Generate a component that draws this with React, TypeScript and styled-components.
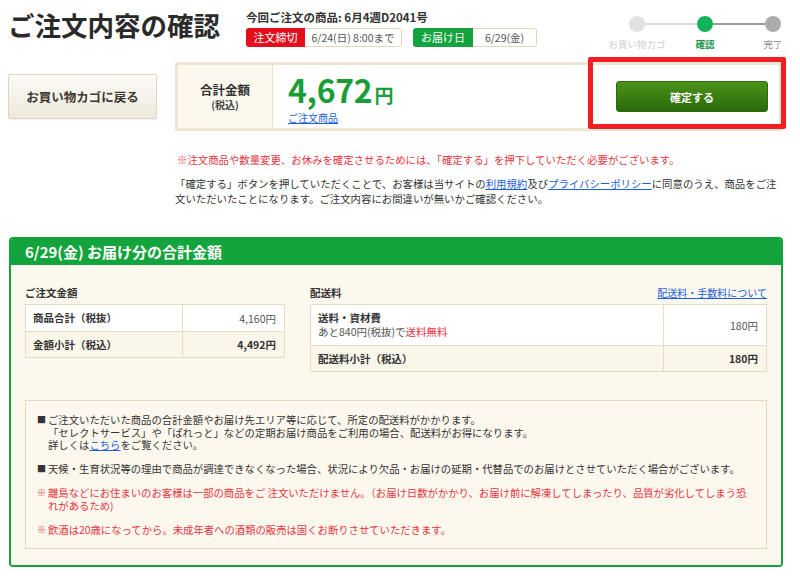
import React from 'react';
import styled, { createGlobalStyle } from 'styled-components';

// Global
//----------------------------------------------
const GlobalStyle = createGlobalStyle`
  * {
    box-sizing: border-box;
  }
  html,
  body {
    margin: 0;
    padding: 0;
    background: #fff;
  }
  body {
    font-family: 'Noto Sans CJK JP', 'Noto Sans', sans-serif;
    color: #333;
  }
`;

type StepState = 'done' | 'current' | 'todo';

const steps: Array<{ label: string; state: StepState }> = [
  { label: 'お買い物カゴ', state: 'done' },
  { label: '確認', state: 'current' },
  { label: '完了', state: 'todo' },
];

const App: React.FC = () => {
  return (
    <>
      <GlobalStyle />
      <Page>
        <TopRow>
          <PageTitle>ご注文内容の確認</PageTitle>
          <OrderInfo>
            <OrderName>今回ご注文の商品: 6月4週D2041号</OrderName>
            <BadgeRow>
              <Badge>
                <BadgeLabel $tone="red">注文締切</BadgeLabel>
                <BadgeValue $width={97}>6/24(日) 8:00まで</BadgeValue>
              </Badge>
              <Badge>
                <BadgeLabel $tone="green">お届け日</BadgeLabel>
                <BadgeValue $width={64}>6/29(金)</BadgeValue>
              </Badge>
            </BadgeRow>
          </OrderInfo>
          <Stepper>
            {steps.map((step, i) => (
              <Step key={step.label} $state={step.state} $first={i === 0}>
                <StepDot $state={step.state} />
                <StepLabel $state={step.state}>{step.label}</StepLabel>
              </Step>
            ))}
          </Stepper>
        </TopRow>

        <ActionRow>
          <BackButton>お買い物カゴに戻る</BackButton>
          <TotalBox>
            <TotalLabel>
              <span>合計金額</span>
              <small>(税込)</small>
            </TotalLabel>
            <AmountBlock>
              <Amount>
                4,672<span>円</span>
              </Amount>
              <SmallLink href="#">ご注文商品</SmallLink>
            </AmountBlock>
            <ConfirmButton>確定する</ConfirmButton>
            <Highlight />
          </TotalBox>
        </ActionRow>

        <Notices>
          <RedNotice>
            ※注文商品や数量変更、お休みを確定させるためには、「確定する」を押下していただく必要がございます。
          </RedNotice>
          <Agreement>
            「確定する」ボタンを押していただくことで、お客様は当サイトの
            <TextLink href="#">利用規約</TextLink>及び
            <TextLink href="#">プライバシーポリシー</TextLink>
            に同意のうえ、商品をご注
            <br />
            文いただいたことになります。ご注文内容にお間違いが無いかご確認ください。
          </Agreement>
        </Notices>

        <DeliveryBox>
          <DeliveryHeader>6/29(金) お届け分の合計金額</DeliveryHeader>
          <DeliveryBody>
            <Columns>
              <Column $width={260}>
                <SectionHead>
                  <SectionTitle>ご注文金額</SectionTitle>
                </SectionHead>
                <PriceTable>
                  <colgroup>
                    <col style={{ width: 157 }} />
                    <col />
                  </colgroup>
                  <tbody>
                    <PriceRow $height={27}>
                      <LabelCell>商品合計（税抜）</LabelCell>
                      <ValueCell>4,160円</ValueCell>
                    </PriceRow>
                    <PriceRow $height={26} $sub>
                      <LabelCell>金額小計（税込）</LabelCell>
                      <ValueCell $bold>4,492円</ValueCell>
                    </PriceRow>
                  </tbody>
                </PriceTable>
              </Column>
              <Column>
                <SectionHead>
                  <SectionTitle>配送料</SectionTitle>
                  <SmallLink href="#">配送料・手数料について</SmallLink>
                </SectionHead>
                <PriceTable>
                  <colgroup>
                    <col style={{ width: 353 }} />
                    <col />
                  </colgroup>
                  <tbody>
                    <PriceRow $height={41}>
                      <LabelCell>
                        送料・資材費
                        <Remark>
                          あと840円(税抜)で<RedText>送料無料</RedText>
                        </Remark>
                      </LabelCell>
                      <ValueCell>180円</ValueCell>
                    </PriceRow>
                    <PriceRow $height={26} $sub>
                      <LabelCell>配送料小計（税込）</LabelCell>
                      <ValueCell $bold>180円</ValueCell>
                    </PriceRow>
                  </tbody>
                </PriceTable>
              </Column>
            </Columns>

            <NotesBox>
              <Note>
                <Marker>■</Marker>
                <div>
                  <NoteLine>
                    ご注文いただいた商品の合計金額やお届け先エリア等に応じて、所定の配送料がかかります。
                  </NoteLine>
                  <NoteLine>
                    「セレクトサービス」や「ぱれっと」などの定期お届け商品をご利用の場合、配送料がお得になります。
                  </NoteLine>
                  <NoteLine>
                    詳しくは<TextLink href="#">こちら</TextLink>をご覧ください。
                  </NoteLine>
                </div>
              </Note>
              <Note>
                <Marker>■</Marker>
                <div>
                  <NoteLine>
                    天候・生育状況等の理由で商品が調達できなくなった場合、状況により欠品・お届けの延期・代替品でのお届けとさせていただく場合がございます。
                  </NoteLine>
                </div>
              </Note>
              <Note $red>
                <Marker>※</Marker>
                <div>
                  <NoteLine>
                    離島などにお住まいのお客様は一部の商品をご 注文いただけません。（お届け日数がかかり、お届け前に解凍してしまったり、品質が劣化してしまう恐
                  </NoteLine>
                  <NoteLine>れがあるため)</NoteLine>
                </div>
              </Note>
              <Note $red>
                <Marker>※</Marker>
                <div>
                  <NoteLine>
                    飲酒は20歳になってから。未成年者への酒類の販売は固くお断りさせていただきます。
                  </NoteLine>
                </div>
              </Note>
            </NotesBox>
          </DeliveryBody>
        </DeliveryBox>
      </Page>
    </>
  );
};

// Layout
//----------------------------------------------
const Page = styled.div`
  width: 800px;
  height: 582px;
  overflow: hidden;
  padding-left: 8px;
`;

const TopRow = styled.div`
  display: flex;
  height: 57px;
`;

const PageTitle = styled.h1`
  flex: 0 0 238px;
  margin: 0;
  padding-top: 8px;
  font-size: 26.5px;
  line-height: 34px;
  font-weight: 700;
  color: #2a2a2a;
  white-space: nowrap;
`;

const OrderInfo = styled.div`
  padding-top: 10px;
`;

const OrderName = styled.div`
  font-size: 11.5px;
  line-height: 14px;
  font-weight: 700;
  color: #333;
`;

const BadgeRow = styled.div`
  display: flex;
  gap: 11px;
  margin-top: 4px;
`;

const Badge = styled.div`
  display: flex;
  height: 19px;
  border-radius: 3px;
  overflow: hidden;
`;

const BadgeLabel = styled.span<{ $tone: 'red' | 'green' }>`
  display: flex;
  align-items: center;
  justify-content: center;
  width: ${(p) => (p.$tone === 'red' ? 59 : 60)}px;
  background: ${(p) => (p.$tone === 'red' ? '#e50f1b' : '#13a43d')};
  color: #fff;
  font-size: 11px;
  line-height: 19px;
`;

const BadgeValue = styled.span<{ $width: number }>`
  display: flex;
  align-items: center;
  justify-content: center;
  width: ${(p) => p.$width}px;
  border: 1px solid #e2d7be;
  border-left: none;
  border-radius: 0 3px 3px 0;
  background: #fff;
  color: #555;
  font-size: 10.5px;
  white-space: nowrap;
`;

// Stepper
//----------------------------------------------
const stepColors: Record<StepState, string> = {
  done: '#e1e1e1',
  current: '#14b25a',
  todo: '#acacac',
};

const Stepper = styled.ol`
  display: flex;
  gap: 16px;
  margin: 0 1px 0 auto;
  padding: 16px 0 0;
  list-style: none;
`;

const Step = styled.li<{ $state: StepState; $first: boolean }>`
  position: relative;
  width: 52px;
  display: flex;
  flex-direction: column;
  align-items: center;

  &::before {
    content: '';
    display: ${(p) => (p.$first ? 'none' : 'block')};
    position: absolute;
    top: 7px;
    right: 26px;
    width: 68px;
    height: 2px;
    background: ${(p) => (p.$state === 'todo' ? '#9a9a9a' : '#dcdcdc')};
  }
`;

const StepDot = styled.span<{ $state: StepState }>`
  position: relative;
  z-index: 1;
  width: 16px;
  height: 16px;
  border-radius: 50%;
  background: ${(p) => stepColors[p.$state]};
`;

const StepLabel = styled.span<{ $state: StepState }>`
  margin-top: 6px;
  font-size: 9.5px;
  line-height: 12px;
  white-space: nowrap;
  font-weight: ${(p) => (p.$state === 'current' ? 700 : 400)};
  color: ${(p) =>
    p.$state === 'current' ? '#1f9a4c' : p.$state === 'done' ? '#cfcfcf' : '#8c8c8c'};
`;

// Action row
//----------------------------------------------
const ActionRow = styled.div`
  display: flex;
  align-items: center;
  padding-top: 5px;
`;

const BackButton = styled.button`
  width: 149px;
  height: 45px;
  padding: 0;
  border: 1px solid #e0d5bb;
  border-radius: 2px;
  background: linear-gradient(#fcfbf6, #ede9de);
  box-shadow: 0 1px 1px rgba(0, 0, 0, 0.06);
  font-family: inherit;
  font-size: 12.5px;
  font-weight: 700;
  color: #3d3730;
  cursor: pointer;
`;

const TotalBox = styled.div`
  position: relative;
  display: flex;
  align-items: stretch;
  width: 607px;
  height: 69px;
  margin-left: 18px;
  border: 3px solid #eee5d2;
  border-radius: 2px;
  background: #fff;
`;

const TotalLabel = styled.div`
  width: 95px;
  display: flex;
  flex-direction: column;
  align-items: center;
  justify-content: center;
  background: #fdf8ee;
  border-right: 1px solid #e9dec6;
  color: #333;

  span {
    font-size: 12.5px;
    line-height: 16px;
    font-weight: 700;
  }
  small {
    font-size: 10px;
    line-height: 14px;
    font-weight: 700;
    color: #444;
  }
`;

const AmountBlock = styled.div`
  padding: 7px 0 0 15px;
`;

const Amount = styled.div`
  font-size: 32px;
  line-height: 34px;
  font-weight: 700;
  color: #199e37;
  letter-spacing: -0.3px;

  span {
    margin-left: 2px;
    font-size: 19px;
    letter-spacing: 0;
  }
`;

const SmallLink = styled.a`
  display: block;
  font-size: 10px;
  line-height: 12px;
  color: #1b5fe0;
  text-decoration: underline;
`;

const ConfirmButton = styled.button`
  align-self: center;
  width: 152px;
  height: 31px;
  margin: 0 11px 0 auto;
  padding: 0;
  border: 1px solid #2b6a10;
  border-radius: 3px;
  background: linear-gradient(#4c9319, #286a0c);
  color: #fff;
  font-family: inherit;
  font-size: 11px;
  font-weight: 700;
  cursor: pointer;
`;

// red annotation frame drawn over the confirm area
const Highlight = styled.div`
  position: absolute;
  left: 410px;
  top: -8px;
  width: 198px;
  height: 72px;
  border: 5px solid #f01e23;
  border-radius: 2px;
  pointer-events: none;
`;

// Notices
//----------------------------------------------
const Notices = styled.div`
  width: 615px;
  margin: 22px 0 0 167px;
  font-size: 10.4px;
`;

const RedNotice = styled.p`
  margin: 0 0 0 2px;
  line-height: 14px;
  color: #e8343f;
  white-space: nowrap;
`;

const Agreement = styled.p`
  margin: 9px 0 0;
  line-height: 15px;
  color: #333;
  white-space: nowrap;
`;

const TextLink = styled.a`
  color: #1b5fe0;
  text-decoration: underline;
`;

// Delivery box
//----------------------------------------------
const DeliveryBox = styled.section`
  width: 774px;
  margin: 31px 0 0 1px;
  border: 2px solid #15a33d;
  border-radius: 4px;
  overflow: hidden;
`;

const DeliveryHeader = styled.h2`
  margin: 0;
  height: 26px;
  padding-left: 14px;
  background: #13a43d;
  color: #fff;
  font-size: 15px;
  line-height: 26px;
  font-weight: 700;
`;

const DeliveryBody = styled.div`
  padding: 21px 14px 16px;
  background: #fdf8ee;
`;

const Columns = styled.div`
  display: flex;
  gap: 25px;
`;

const Column = styled.div<{ $width?: number }>`
  ${(p) => (p.$width ? `flex: 0 0 ${p.$width}px;` : 'flex: 1;')}
`;

const SectionHead = styled.div`
  display: flex;
  justify-content: space-between;
  align-items: center;
  height: 14px;
  margin-bottom: 4px;
`;

const SectionTitle = styled.h3`
  margin: 0;
  font-size: 10.5px;
  line-height: 14px;
  font-weight: 700;
  color: #333;
`;

const PriceTable = styled.table`
  width: 100%;
  border-collapse: collapse;
  table-layout: fixed;
  font-size: 10.5px;
`;

const PriceRow = styled.tr<{ $height: number; $sub?: boolean }>`
  height: ${(p) => p.$height}px;
  background: ${(p) => (p.$sub ? '#fbf6ea' : '#fff')};
`;

const LabelCell = styled.td`
  padding: 0 7px;
  border: 1px solid #e6dcc3;
  font-weight: 700;
  line-height: 14px;
  color: #333;
  vertical-align: middle;
`;

const ValueCell = styled.td<{ $bold?: boolean }>`
  padding: 0 8px;
  border: 1px solid #e6dcc3;
  text-align: right;
  font-weight: ${(p) => (p.$bold ? 700 : 400)};
  color: ${(p) => (p.$bold ? '#333' : '#555')};
  vertical-align: middle;
`;

const Remark = styled.span`
  display: block;
  font-weight: 400;
  color: #555;
`;

const RedText = styled.span`
  color: #e8343f;
`;

const NotesBox = styled.div`
  margin-top: 28px;
  padding: 13px 10px 12px 11px;
  border: 1px solid #e5dabf;
  background: #fdf8ee;
`;

const Note = styled.div<{ $red?: boolean }>`
  display: grid;
  grid-template-columns: 11px 1fr;
  font-size: 10.35px;
  line-height: 12.5px;
  color: ${(p) => (p.$red ? '#e8343f' : '#333')};
  white-space: nowrap;

  & + & {
    margin-top: 11.5px;
  }
`;

const NoteLine = styled.div`
  height: 12.5px;
`;

const Marker = styled.span`
  font-size: 9px;
`;

export default App;
